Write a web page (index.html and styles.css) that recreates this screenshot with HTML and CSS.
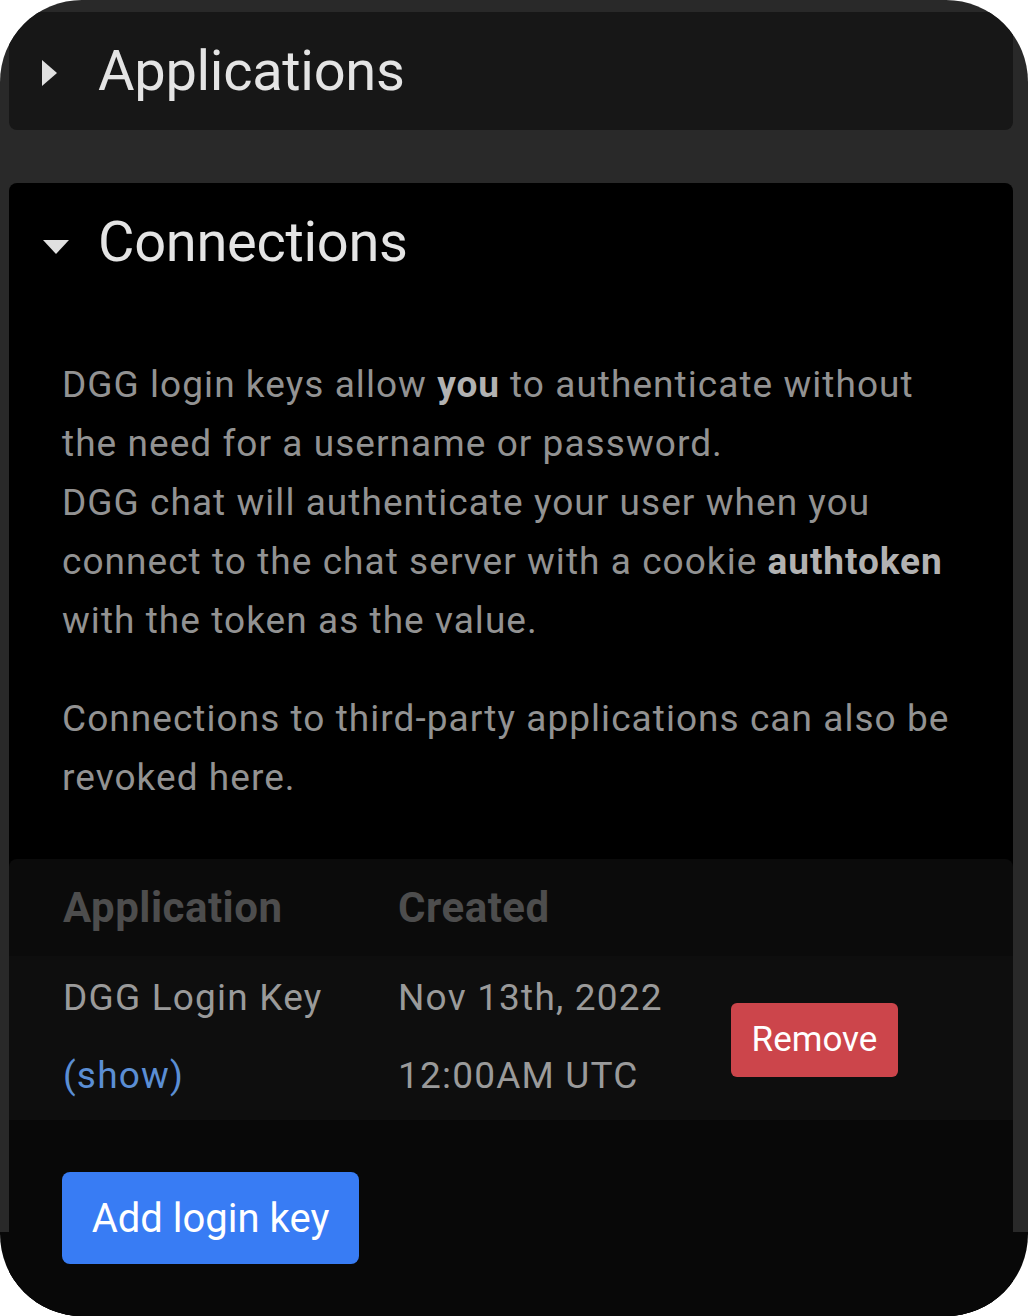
FILE: index.html
```html
<!DOCTYPE html>
<html lang="en">
<head>
<meta charset="utf-8">
<title>Settings</title>
<link rel="stylesheet" href="styles.css">
</head>
<body>
<div class="frame">
  <section class="panel panel-closed">
    <div class="summary">
      <svg class="caret caret-right" width="15" height="26" viewBox="0 0 15 26"><path d="M0 0 L15 13 L0 26 Z" fill="#e0e0e0"/></svg>
      <h2 class="title">Applications</h2>
    </div>
  </section>
  <section class="panel panel-open">
    <div class="summary">
      <svg class="caret caret-down" width="26" height="14" viewBox="0 0 26 14"><path d="M0 0 L26 0 L13 14 Z" fill="#e0e0e0"/></svg>
      <h2 class="title">Connections</h2>
    </div>
    <div class="content">
      <p class="para">DGG login keys allow <strong>you</strong> to authenticate without the need for a username or password.<br>DGG chat will authenticate your user when you connect to the chat server with a cookie <strong>authtoken</strong> with the token as the value.</p>
      <p class="para">Connections to third-party applications can also be revoked here.</p>
    </div>
    <div class="table">
      <div class="thead">
        <div class="th">Application</div>
        <div class="th">Created</div>
        <div class="th"></div>
      </div>
      <div class="trow">
        <div class="td">DGG Login Key<br><a class="link" href="#">(show)</a></div>
        <div class="td">Nov 13th, 2022<br>12:00AM UTC</div>
        <div class="td td-action"><button class="btn btn-danger">Remove</button></div>
      </div>
    </div>
    <div class="actions">
      <button class="btn btn-primary">Add login key</button>
    </div>
  </section>
</div>
</body>
</html>
```

FILE: styles.css
```css
html, body {
  margin: 0;
  padding: 0;
  background: #ffffff;
}
body {
  font-family: Roboto, "Noto Sans", sans-serif;
}
.frame {
  width: 1028px;
  height: 1316px;
  box-sizing: border-box;
  border-radius: 82px;
  overflow: hidden;
  background: linear-gradient(to bottom, #292929 1232px, #080808 1232px);
  padding: 12px 15px 0 9px;
  display: flex;
  flex-direction: column;
  gap: 53px;
}
.panel {
  border-radius: 8px;
}
.panel-closed {
  background: #171717;
}
.panel-open {
  background: #000000;
  flex: 1;
  display: flex;
  flex-direction: column;
  border-radius: 8px 8px 0 0;
}
.summary {
  height: 118px;
  display: flex;
  align-items: center;
  position: relative;
  padding-left: 89px;
}
.caret {
  position: absolute;
  display: block;
}
.caret-right {
  left: 33px;
  top: 48px;
}
.caret-down {
  left: 34px;
  top: 57px;
}
.title {
  margin: 0;
  font-weight: 400;
  font-size: 56px;
  letter-spacing: -0.3px;
  color: #e4e4e4;
  line-height: 1;
}
.content {
  padding: 54px 54px 52px 53px;
}
.para {
  margin: 0;
  font-size: 37px;
  line-height: 59px;
  letter-spacing: 1.05px;
  color: #929292;
}
.para + .para {
  margin-top: 39px;
}
.para strong {
  color: #b2b2b2;
  font-weight: 700;
  letter-spacing: 0.9px;
}
.table {
  border-radius: 8px 8px 0 0;
  overflow: hidden;
}
.thead, .trow {
  display: grid;
  grid-template-columns: 335px 333px 1fr;
  padding-left: 54px;
}
.thead {
  background: #0b0b0b;
  height: 97px;
  align-items: center;
}
.th {
  font-size: 42px;
  font-weight: 700;
  letter-spacing: 0.5px;
  color: #4d4d4d;
}
.trow {
  background: #0e0e0e;
  padding-top: 3px;
  padding-bottom: 5px;
  align-items: center;
}
.td {
  font-size: 37px;
  line-height: 78px;
  letter-spacing: 1.2px;
  color: #9a9a9a;
}
.link {
  color: #5b8ed4;
  text-decoration: none;
}
.td-action {
  display: flex;
  align-items: center;
}
.btn {
  font-family: Roboto, "Noto Sans", sans-serif;
  border: none;
  color: #ffffff;
  cursor: pointer;
}
.btn-danger {
  background: #cc454b;
  width: 167px;
  height: 74px;
  border-radius: 6px;
  font-size: 35px;
  letter-spacing: 0;
  padding: 0;
  margin-top: 5px;
}
.actions {
  flex: 1;
  background: #080808;
  padding: 52px 0 0 53px;
}
.btn-primary {
  background: #387cf4;
  width: 297px;
  height: 92px;
  border-radius: 8px;
  font-size: 40px;
  padding: 0;
}
```
